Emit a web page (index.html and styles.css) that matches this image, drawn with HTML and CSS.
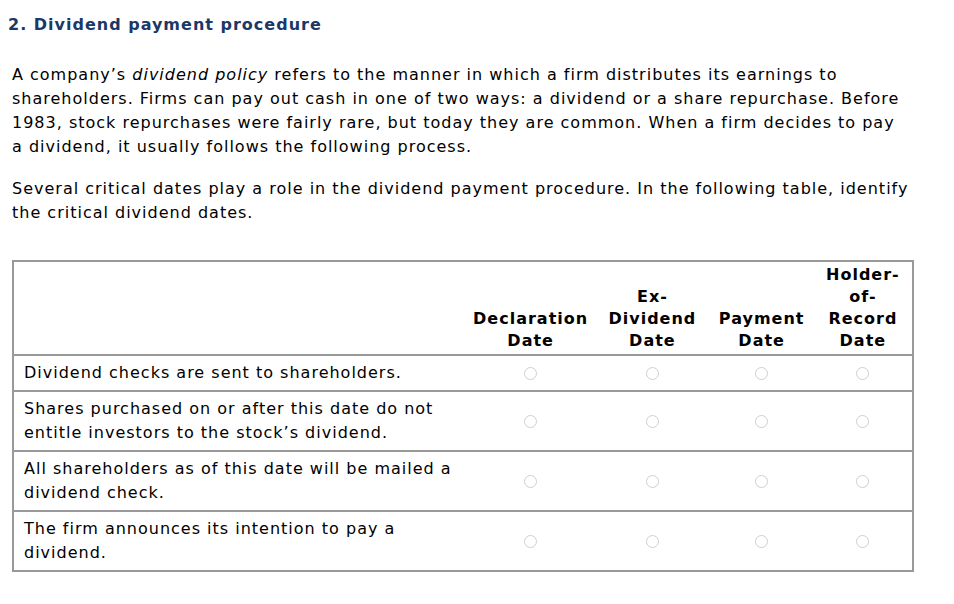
FILE: index.html
```html
<!DOCTYPE html>
<html>
<head>
<meta charset="utf-8">
<link rel="stylesheet" href="styles.css">
</head>
<body>
<div class="page">
  <h2 class="title">2. Dividend payment procedure</h2>
  <div class="content">
    <p class="para para-intro">A company’s <em>dividend policy</em> refers to the manner in which a firm distributes its earnings to shareholders. Firms can pay out cash in one of two ways: a dividend or a share repurchase. Before 1983, stock repurchases were fairly rare, but today they are common. When a firm decides to pay a dividend, it usually follows the following process.</p>
    <p class="para">Several critical dates play a role in the dividend payment procedure. In the following table, identify the critical dividend dates.</p>
    <table class="grid">
      <colgroup>
        <col class="c-text">
        <col class="c-decl">
        <col class="c-ex">
        <col class="c-pay">
        <col class="c-hold">
      </colgroup>
      <thead>
        <tr>
          <th class="blank"></th>
          <th>Declaration<br>Date</th>
          <th>Ex-<br>Dividend<br>Date</th>
          <th>Payment<br>Date</th>
          <th>Holder-<br>of-<br>Record<br>Date</th>
        </tr>
      </thead>
      <tbody>
        <tr>
          <td class="desc">Dividend checks are sent to shareholders.</td>
          <td class="opt"><span class="radio"></span></td>
          <td class="opt"><span class="radio"></span></td>
          <td class="opt"><span class="radio"></span></td>
          <td class="opt"><span class="radio"></span></td>
        </tr>
        <tr>
          <td class="desc">Shares purchased on or after this date do not entitle investors to the stock’s dividend.</td>
          <td class="opt"><span class="radio"></span></td>
          <td class="opt"><span class="radio"></span></td>
          <td class="opt"><span class="radio"></span></td>
          <td class="opt"><span class="radio"></span></td>
        </tr>
        <tr>
          <td class="desc">All shareholders as of this date will be mailed a dividend check.</td>
          <td class="opt"><span class="radio"></span></td>
          <td class="opt"><span class="radio"></span></td>
          <td class="opt"><span class="radio"></span></td>
          <td class="opt"><span class="radio"></span></td>
        </tr>
        <tr>
          <td class="desc">The firm announces its intention to pay a dividend.</td>
          <td class="opt"><span class="radio"></span></td>
          <td class="opt"><span class="radio"></span></td>
          <td class="opt"><span class="radio"></span></td>
          <td class="opt"><span class="radio"></span></td>
        </tr>
      </tbody>
    </table>
  </div>
</div>
</body>
</html>
```
FILE: styles.css
```css
html, body {
  margin: 0;
  padding: 0;
  background: #ffffff;
}
body {
  font-family: "DejaVu Sans", Verdana, sans-serif;
  color: #000000;
  letter-spacing: 1px;
}
.page {
  padding: 15px 8px 0 8px;
}
.title {
  margin: 0;
  font-size: 16px;
  line-height: 20px;
  font-weight: bold;
  color: #1b3866;
}
.content {
  padding: 0 0 0 4px;
  margin-top: 28px;
}
.para {
  margin: 0 0 18px 0;
  font-size: 16px;
  line-height: 24px;
  width: 904px;
}
.para-intro {
  width: 893px;
}
.grid {
  margin-top: 35px;
  border-collapse: collapse;
  border: 2px solid #999999;
  table-layout: fixed;
  width: 902px;
}
.c-text { width: 452px; }
.c-decl { width: 129px; }
.c-ex { width: 114px; }
.c-pay { width: 104px; }
.c-hold { width: 99px; }
.grid th {
  font-size: 16px;
  line-height: 22px;
  font-weight: bold;
  text-align: center;
  vertical-align: bottom;
  padding: 2px 0 2px 0;
  border-bottom: 2px solid #999999;
}
.grid td {
  border-top: 2px solid #999999;
  font-size: 16px;
  line-height: 24px;
  padding: 5px 10px;
  vertical-align: middle;
}
.grid td.desc {
  padding-left: 10px;
}
.grid td.opt {
  text-align: center;
  padding: 0;
}
.radio {
  display: inline-block;
  width: 11px;
  height: 11px;
  border: 1px solid #cfcfcf;
  border-radius: 50%;
  background: #ffffff;
  vertical-align: middle;
}
```
